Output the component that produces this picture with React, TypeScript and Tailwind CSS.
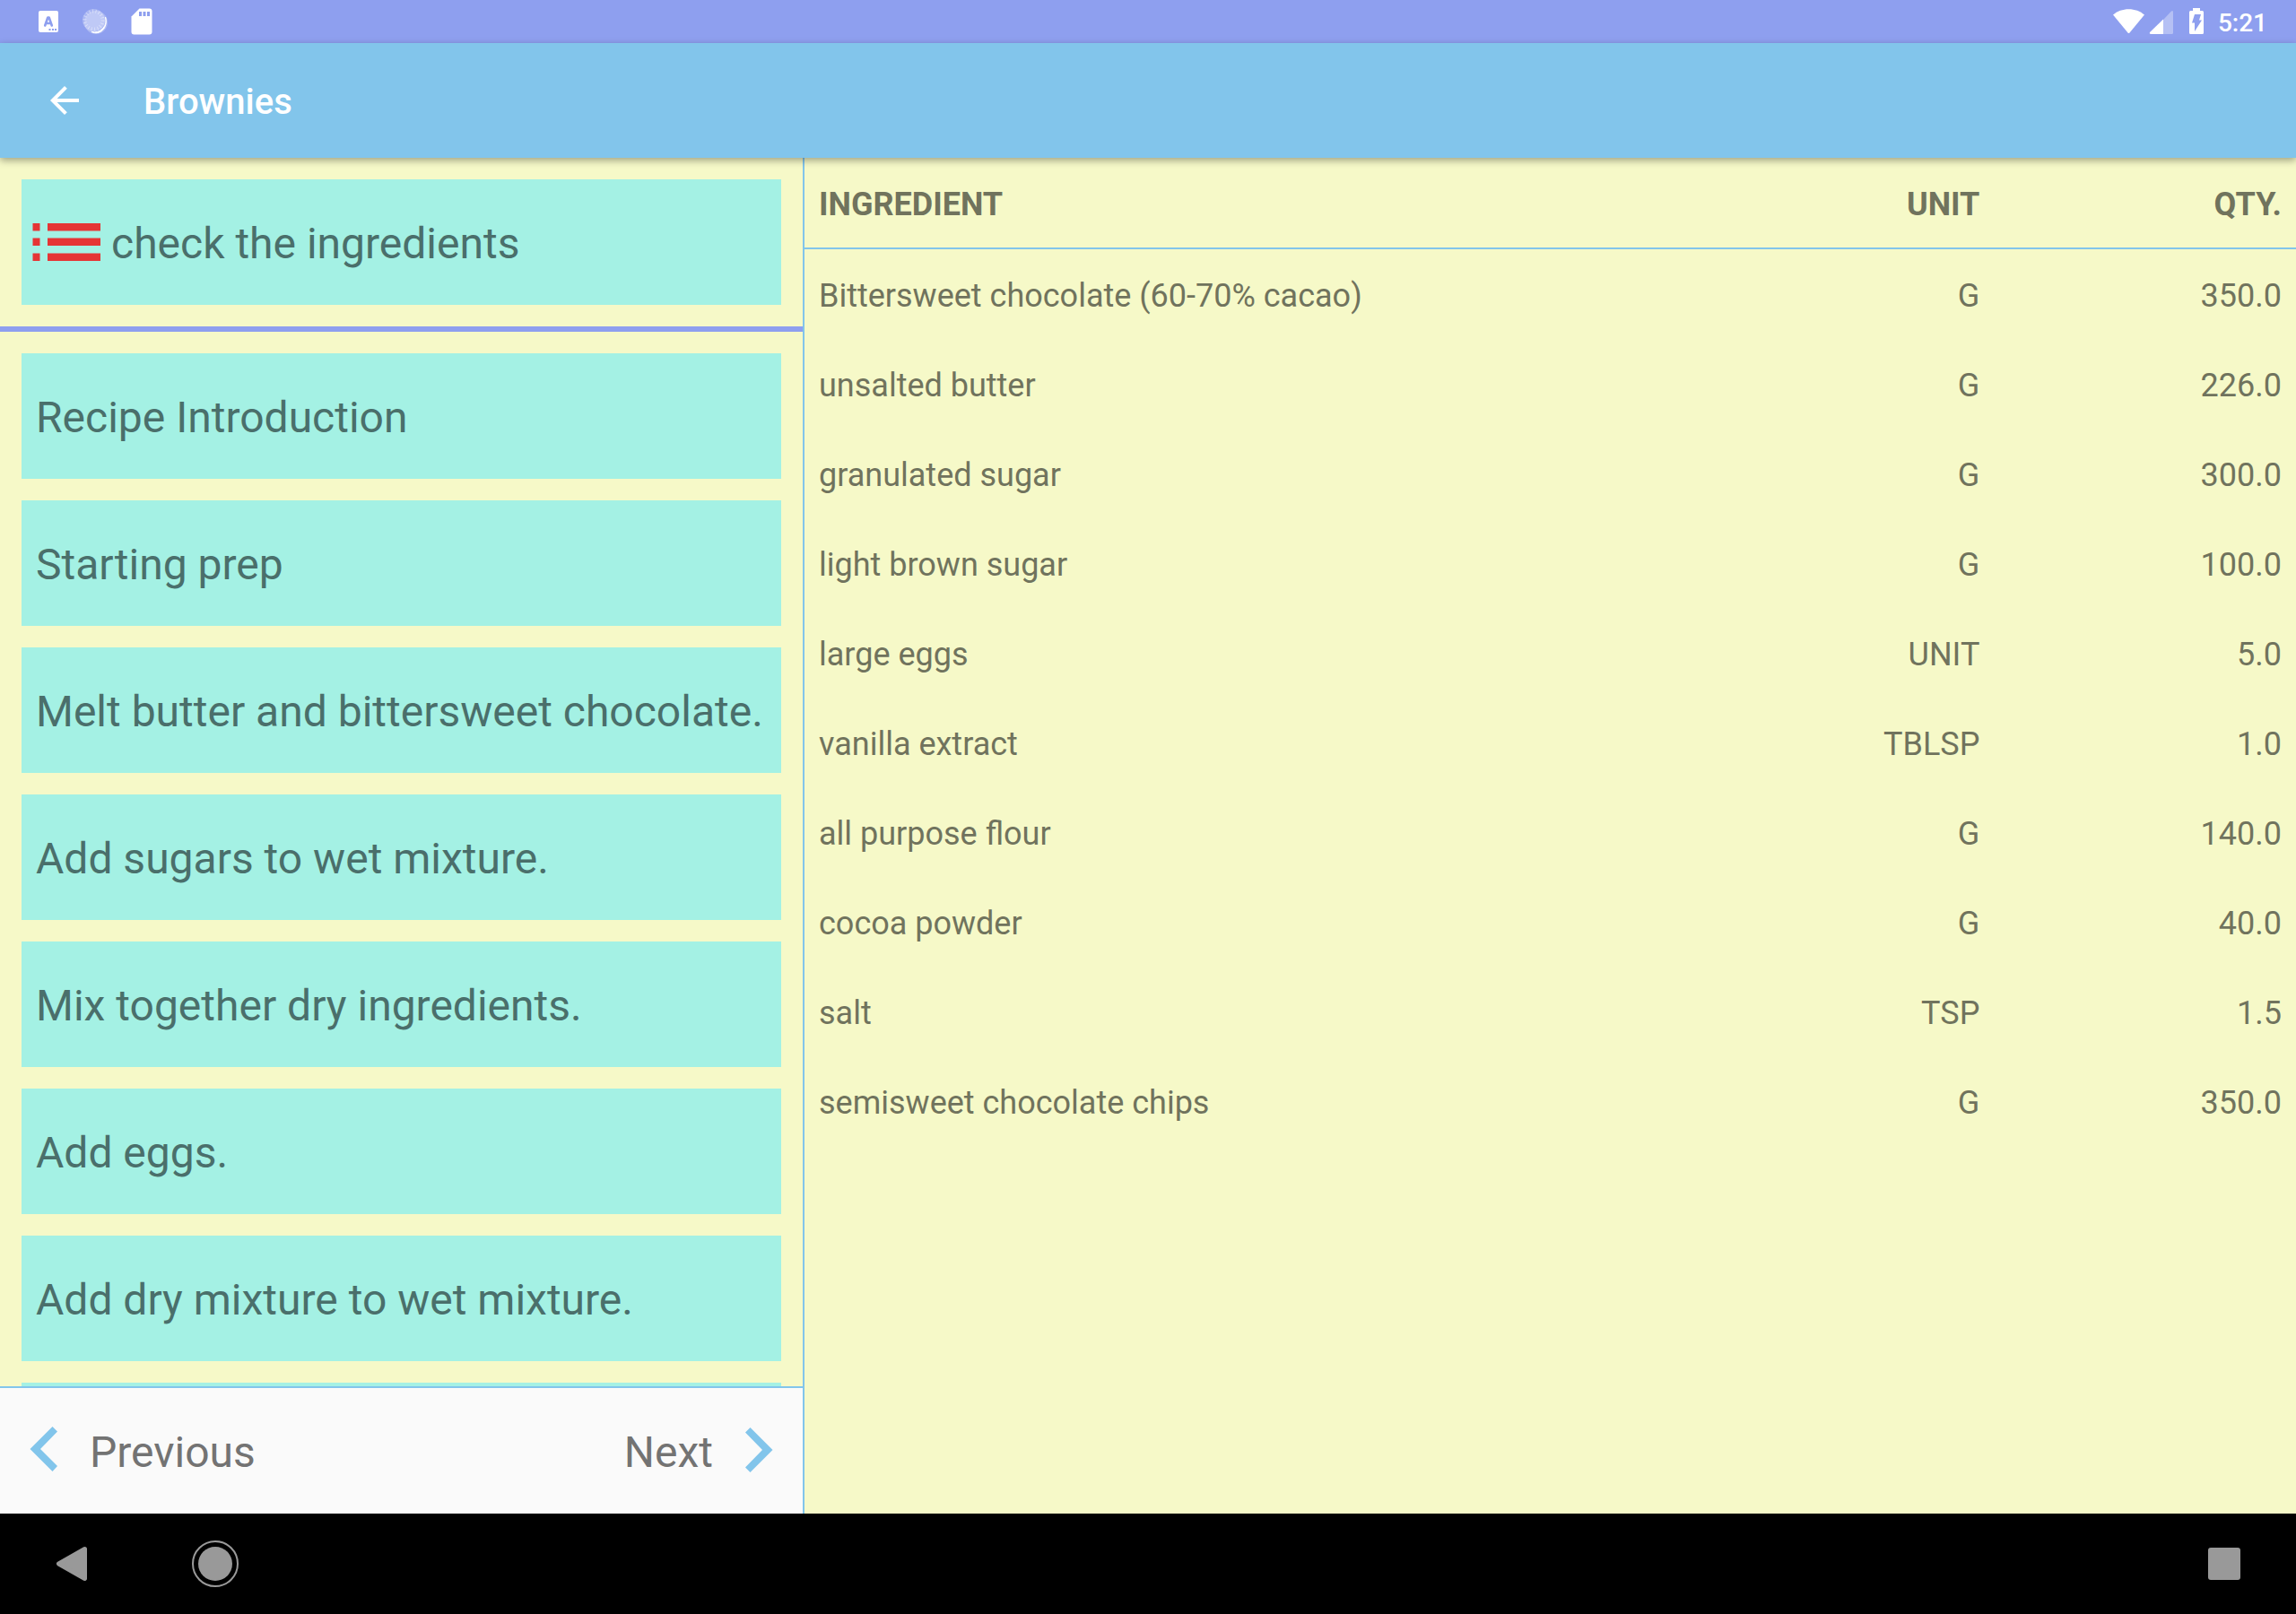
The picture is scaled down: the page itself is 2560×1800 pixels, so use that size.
import React from "react";

const steps = [
  "Recipe Introduction",
  "Starting prep",
  "Melt butter and bittersweet chocolate.",
  "Add sugars to wet mixture.",
  "Mix together dry ingredients.",
  "Add eggs.",
  "Add dry mixture to wet mixture.",
];

const ingredients: [string, string, string][] = [
  ["Bittersweet chocolate (60-70% cacao)", "G", "350.0"],
  ["unsalted butter", "G", "226.0"],
  ["granulated sugar", "G", "300.0"],
  ["light brown sugar", "G", "100.0"],
  ["large eggs", "UNIT", "5.0"],
  ["vanilla extract", "TBLSP", "1.0"],
  ["all purpose flour", "G", "140.0"],
  ["cocoa powder", "G", "40.0"],
  ["salt", "TSP", "1.5"],
  ["semisweet chocolate chips", "G", "350.0"],
];

function StatusBar() {
  return (
    <div className="flex h-12 shrink-0 items-center justify-between bg-[#8e9fef] pl-10 pr-8 text-white">
      <div className="flex items-center gap-4">
        <svg className="h-9 w-9" viewBox="0 0 36 36" aria-hidden="true">
          <rect x="3" y="6" width="22" height="24" rx="2" fill="#fff" />
          <path
            d="M10.200 22.500L13.300 13.500h1.400L17.800 22.500M11.500 20h5"
            fill="none"
            stroke="#8e9fef"
            strokeWidth="2.600"
            strokeLinejoin="round"
            strokeLinecap="round"
          />
          <path d="M14.500 26h2v2h-2zM18 26h2v2h-2zM21 26h2v2h-2z" fill="#8e9fef" />
        </svg>
        <svg className="h-9 w-9" viewBox="0 0 36 36" aria-hidden="true">
          <circle cx="15" cy="19" r="13" fill="#fff" opacity=".25" />
          <circle cx="12.500" cy="16.500" r="12.500" fill="#fff" opacity=".25" />
          <circle cx="12.500" cy="16.500" r="10" fill="none" stroke="#fff" strokeWidth="4" strokeDasharray="1 2.490" opacity=".4" />
          <path d="M25.500 13a13 13 0 0 1-15.500 16.500c9 4.500 19-4 15.500-16.500z" fill="#fff" stroke="#fff" />
        </svg>
        <svg className="h-9 w-9" viewBox="0 0 36 36" aria-hidden="true">
          <path d="M11.500 3.500H22.500a3 3 0 0 1 3 3v23a3 3 0 0 1-3 3H5.500a3 3 0 0 1-3-3V12.500z" fill="#fff" />
          <path d="M11 7h3v5h-3zM15.500 7h3v5h-3zM20 7h3v5h-3z" fill="#8e9fef" />
        </svg>
      </div>
      <div className="flex items-center">
        <svg className="h-12 w-[118px]" viewBox="0 0 118 48" aria-hidden="true">
          <path d="M1 16.500C10 8 27 8 36 16.500L19.500 36.500q-1 1-2 0z" fill="#fff" />
          <path d="M42 38L66 12.500q2-1.500 2 1v23q0 1.500-1.500 1.500z" fill="#fff" opacity=".35" />
          <path d="M57 21.500V38H43q-2-.500-1-2z" fill="#fff" />
          <path d="M90 9h8v3h2.500q1.500 0 1.500 1.500v23q0 1.500-1.500 1.500h-13q-1.500 0-1.500-1.500v-23q0-1.500 1.500-1.500H90z" fill="#fff" />
          <path d="M92 16h7l-2 6.500h3l-8 12.500v-9.500h-3z" fill="#8e9fef" />
        </svg>
        <span className="pt-1 text-[28px] leading-9 font-medium">5:21</span>
      </div>
    </div>
  );
}

function AppBar() {
  return (
    <header className="relative z-10 flex h-32 shrink-0 items-center gap-16 bg-[#82c5eb] pl-12 text-white shadow-[0_3px_8px_rgba(0,0,0,0.35)]">
      <button type="button" aria-label="Navigate up" className="flex h-12 w-12 items-center justify-center">
        <svg className="h-12 w-12" viewBox="0 0 24 24" aria-hidden="true">
          <path d="M20 11H7.830l5.590-5.590L12 4l-8 8 8 8 1.410-1.410L7.830 13H20v-2z" fill="#fff" />
        </svg>
      </button>
      <h1 className="pt-1 text-[40px] leading-12 font-medium">Brownies</h1>
    </header>
  );
}

function StepList() {
  return (
    <section className="flex w-[calc(35%+1px)] shrink-0 flex-col border-r-2 border-[#82c5eb]">
      <div className="shrink-0 border-b-6 border-[#8e9fef] p-6">
        <button type="button" className="flex h-35 w-full items-center gap-3 bg-[#a4f1e4] pl-3 text-left text-[48px] leading-14 text-[#4a6f6b]">
          <svg className="h-12 w-[76px]" viewBox="0 0 76 48" aria-hidden="true">
            <path
              d="M.500 3h8v8.500h-8zM17 3h59v8.500H17zM.500 19.500h8V28h-8zM17 19.500h59V28H17zM.500 36.500h8V45h-8zM17 36.500h59V45H17z"
              fill="#e53535"
            />
          </svg>
          <span className="pt-1">check the ingredients</span>
        </button>
      </div>
      <ul className="flex min-h-0 flex-1 flex-col gap-6 overflow-hidden px-6 pt-6">
        {steps.map((step) => (
          <li key={step} className="shrink-0">
            <button type="button" className="flex h-35 w-full items-center bg-[#a4f1e4] px-4 text-left text-[48px] leading-14 whitespace-nowrap text-[#4a6f6b]">
              <span className="pt-1">{step}</span>
            </button>
          </li>
        ))}
        <li className="h-35 shrink-0 bg-[#a4f1e4]" aria-hidden="true" />
      </ul>
      <nav className="flex h-[142px] shrink-0 items-center justify-between border-t-2 border-[#82c5eb] bg-[#fafafa] px-8 text-[48px] leading-14 text-[#737373]">
        <button type="button" className="flex items-center gap-9">
          <svg className="h-14 w-8" viewBox="0 0 32 56" aria-hidden="true">
            <path d="M1.500 26L26.500 1L32 6.500L13 26L32 45L26.500 51z" fill="#82c5eb" />
          </svg>
          <span className="pt-1">Previous</span>
        </button>
        <button type="button" className="flex items-center gap-9">
          <span className="pt-1">Next</span>
          <svg className="h-14 w-8" viewBox="0 0 32 56" aria-hidden="true">
            <path d="M30.500 27L5.500 2L0 7.500L19 27L0 46.500L5.500 52z" fill="#82c5eb" />
          </svg>
        </button>
      </nav>
    </section>
  );
}

function IngredientTable() {
  return (
    <section className="min-w-0 flex-1">
      <table className="w-full table-fixed border-separate border-spacing-0 text-[36px] leading-11 text-[#70735d]">
        <colgroup>
          <col className="w-3/5" />
          <col className="w-1/5" />
          <col className="w-1/5" />
        </colgroup>
        <thead>
          <tr className="h-[102px]">
            <th scope="col" className="border-b-2 border-[#82c5eb] px-4 pt-1 pb-0 text-left font-bold">INGREDIENT</th>
            <th scope="col" className="border-b-2 border-[#82c5eb] pt-1 pr-5 pb-0 text-right font-bold">UNIT</th>
            <th scope="col" className="border-b-2 border-[#82c5eb] px-4 pt-1 pb-0 text-right font-bold">QTY.</th>
          </tr>
        </thead>
        <tbody>
          {ingredients.map(([name, unit, quantity]) => (
            <tr key={name} className="h-25">
              <td className="px-4 pt-1 pb-0">{name}</td>
              <td className="pt-1 pr-5 pb-0 text-right">{unit}</td>
              <td className="px-4 pt-1 pb-0 text-right">{quantity}</td>
            </tr>
          ))}
        </tbody>
      </table>
    </section>
  );
}

function NavigationBar() {
  return (
    <footer className="flex h-28 shrink-0 items-center justify-between bg-black px-12">
      <div className="flex items-center gap-24">
        <button type="button" aria-label="Back">
          <svg className="h-16 w-16" viewBox="0 0 64 64" aria-hidden="true">
            <path d="M46.500 15.500L17.500 32L46.500 48.500z" fill="#999" stroke="#999" strokeWidth="5" strokeLinejoin="round" />
          </svg>
        </button>
        <button type="button" aria-label="Home">
          <svg className="h-16 w-16" viewBox="0 0 64 64" aria-hidden="true">
            <circle cx="32" cy="32" r="25" fill="none" stroke="#999" strokeWidth="2" />
            <circle cx="32" cy="32" r="19" fill="#999" />
          </svg>
        </button>
      </div>
      <button type="button" aria-label="Recent apps">
        <svg className="h-16 w-16" viewBox="0 0 64 64" aria-hidden="true">
          <rect x="14" y="14" width="36" height="36" rx="3" fill="#999" />
        </svg>
      </button>
    </footer>
  );
}

export default function App() {
  return (
    <div className="flex h-screen flex-col overflow-hidden bg-[#f6f9c8] font-['Roboto',sans-serif]">
      <StatusBar />
      <AppBar />
      <main className="flex min-h-0 flex-1">
        <StepList />
        <IngredientTable />
      </main>
      <NavigationBar />
    </div>
  );
}
